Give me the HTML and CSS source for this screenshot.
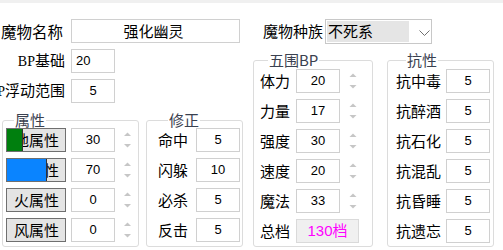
FILE: index.html
```html
<!DOCTYPE html>
<html lang="zh">
<head>
<meta charset="utf-8">
<title>魔物编辑</title>
<link rel="stylesheet" href="styles.css">
</head>
<body>
<div class="app">
  <div class="top-row">
    <div class="lbl lbl-top"><span>魔物名称</span></div>
    <div class="field name">强化幽灵</div>
    <div class="lbl-race">魔物种族</div>
    <div class="select">
      <span class="sel-val">不死系</span>
      <svg class="chev" width="11" height="6" viewBox="0 0 11 6"><polyline points="0.5,0.5 5.5,5.5 10.5,0.5" fill="none" stroke="#707070" stroke-width="1"/></svg>
    </div>
  </div>
  <div class="main">
    <div class="left">
      <div class="bp-row">
        <div class="lbl"><span><span class="mono">BP</span>基础</span></div>
        <div class="field num al-left">20</div>
      </div>
      <div class="bp-row">
        <div class="lbl"><span><span class="mono">BP</span>浮动范围</span></div>
        <div class="field num">5</div>
      </div>
      <div class="groups">
        <fieldset class="grp grp-attr">
          <legend>属性</legend>
          <div class="rows">
            <div class="row">
              <button class="attr-btn"><span class="swatch sw-green"></span>地属性</button>
              <div class="field num">30</div>
              <svg class="spin" width="9" height="24" viewBox="0 0 9 24"><polygon points="1,8 4.5,4.5 8,8" fill="#c6c6c6"/><polygon points="1,16 8,16 4.5,19.5" fill="#c6c6c6"/></svg>
            </div>
            <div class="row">
              <button class="attr-btn"><span class="swatch sw-blue"></span>水属性</button>
              <div class="field num">70</div>
              <svg class="spin" width="9" height="24" viewBox="0 0 9 24"><polygon points="1,8 4.5,4.5 8,8" fill="#c6c6c6"/><polygon points="1,16 8,16 4.5,19.5" fill="#c6c6c6"/></svg>
            </div>
            <div class="row">
              <button class="attr-btn">火属性</button>
              <div class="field num">0</div>
              <svg class="spin" width="9" height="24" viewBox="0 0 9 24"><polygon points="1,8 4.5,4.5 8,8" fill="#c6c6c6"/><polygon points="1,16 8,16 4.5,19.5" fill="#c6c6c6"/></svg>
            </div>
            <div class="row">
              <button class="attr-btn">风属性</button>
              <div class="field num">0</div>
              <svg class="spin" width="9" height="24" viewBox="0 0 9 24"><polygon points="1,8 4.5,4.5 8,8" fill="#c6c6c6"/><polygon points="1,16 8,16 4.5,19.5" fill="#c6c6c6"/></svg>
            </div>
          </div>
        </fieldset>
        <fieldset class="grp grp-mod">
          <legend>修正</legend>
          <div class="rows">
            <div class="row"><span class="rl w2">命中</span><div class="field num">5</div></div>
            <div class="row"><span class="rl w2">闪躲</span><div class="field num">10</div></div>
            <div class="row"><span class="rl w2">必杀</span><div class="field num">5</div></div>
            <div class="row"><span class="rl w2">反击</span><div class="field num">5</div></div>
          </div>
        </fieldset>
      </div>
    </div>
    <div class="right">
      <fieldset class="grp grp-bp">
        <legend>五围BP</legend>
        <div class="rows">
          <div class="row"><span class="rl w2">体力</span><div class="field num">20</div><svg class="spin" width="10" height="24" viewBox="0 0 10 24"><polygon points="1.5,8 5,4.5 8.5,8" fill="#c6c6c6"/><polygon points="1.5,16 8.5,16 5,19.5" fill="#c6c6c6"/></svg></div>
          <div class="row"><span class="rl w2">力量</span><div class="field num">17</div><svg class="spin" width="10" height="24" viewBox="0 0 10 24"><polygon points="1.5,8 5,4.5 8.5,8" fill="#c6c6c6"/><polygon points="1.5,16 8.5,16 5,19.5" fill="#c6c6c6"/></svg></div>
          <div class="row"><span class="rl w2">强度</span><div class="field num">30</div><svg class="spin" width="10" height="24" viewBox="0 0 10 24"><polygon points="1.5,8 5,4.5 8.5,8" fill="#c6c6c6"/><polygon points="1.5,16 8.5,16 5,19.5" fill="#c6c6c6"/></svg></div>
          <div class="row"><span class="rl w2">速度</span><div class="field num">20</div><svg class="spin" width="10" height="24" viewBox="0 0 10 24"><polygon points="1.5,8 5,4.5 8.5,8" fill="#c6c6c6"/><polygon points="1.5,16 8.5,16 5,19.5" fill="#c6c6c6"/></svg></div>
          <div class="row"><span class="rl w2">魔法</span><div class="field num">33</div><svg class="spin" width="10" height="24" viewBox="0 0 10 24"><polygon points="1.5,8 5,4.5 8.5,8" fill="#c6c6c6"/><polygon points="1.5,16 8.5,16 5,19.5" fill="#c6c6c6"/></svg></div>
          <div class="row"><span class="rl w2">总档</span><div class="field total">130档</div></div>
        </div>
      </fieldset>
      <fieldset class="grp grp-res">
        <legend>抗性</legend>
        <div class="rows">
          <div class="row"><span class="rl w3">抗中毒</span><div class="field num">5</div></div>
          <div class="row"><span class="rl w3">抗醉酒</span><div class="field num">5</div></div>
          <div class="row"><span class="rl w3">抗石化</span><div class="field num">5</div></div>
          <div class="row"><span class="rl w3">抗混乱</span><div class="field num">5</div></div>
          <div class="row"><span class="rl w3">抗昏睡</span><div class="field num">5</div></div>
          <div class="row"><span class="rl w3">抗遗忘</span><div class="field num">5</div></div>
        </div>
      </fieldset>
    </div>
  </div>
</div>
</body>
</html>
```
FILE: styles.css
```css
* { box-sizing: border-box; }
html, body { margin: 0; padding: 0; background: #ffffff; }
body {
  font-family: "Noto Sans CJK SC", "Noto Sans", sans-serif;
  font-size: 15px;
  line-height: 16px;
  color: #000000;
}
.app {
  width: 503px;
  height: 250px;
  overflow: hidden;
  border-top: 3px solid #f0f0f0;
}
.top-row {
  display: flex;
  align-items: center;
  height: 24px;
  margin-top: 16px;
}
.lbl {
  width: 65px;
  flex: none;
  display: flex;
  justify-content: flex-end;
  white-space: nowrap;
}
.lbl-top { font-size: 15.5px; width: 63px; margin-right: 2px; }
.mono { font-family: "Liberation Serif", serif; font-size: 14px; }
.field {
  flex: none;
  height: 24px;
  border: 1px solid #d0d0d0;
  background: #ffffff;
  display: flex;
  align-items: center;
  justify-content: center;
  white-space: nowrap;
}
.num {
  width: 44px;
  font-family: "Liberation Sans", Arial, sans-serif;
  font-size: 13px;
}
.al-left { justify-content: flex-start; padding-left: 4px; }
.name {
  width: 169px;
  margin-left: 6px;
  padding-right: 4px;
}
.lbl-race { margin-left: 23px; white-space: nowrap; }
.select {
  flex: none;
  width: 107px;
  height: 25px;
  margin-left: 2px;
  border: 1px solid #c8c8c8;
  display: flex;
  align-items: center;
  padding: 1px;
}
.sel-val {
  width: 82px;
  height: 100%;
  background: #e5e5e5;
  display: flex;
  align-items: center;
  padding-left: 1px;
}
.chev { margin-left: 10px; margin-top: 3px; }
.main { display: flex; align-items: flex-start; }
.left { width: 243px; flex: none; }
.bp-row {
  display: flex;
  align-items: center;
  height: 24px;
  margin-top: 6px;
}
.bp-row .field { margin-left: 6px; }
.groups { display: flex; margin-top: 9px; }
.grp {
  margin: 0;
  padding: 0;
  min-width: 0;
  border: 1px solid #dcdcdc;
  border-radius: 3px;
}
.grp legend {
  padding: 0 1px;
  height: 16px;
  line-height: 16px;
  font-size: 15px;
  color: #3a4150;
}
.rows { display: flex; flex-direction: column; gap: 6px; }
.row { display: flex; align-items: center; height: 24px; }
.rl { flex: none; white-space: nowrap; }
.w2 { width: 30px; }
.w3 { width: 45px; }

.grp-attr { margin-left: 2px; width: 137px; padding: 0 0 4px 3px; }
.grp-attr legend { margin-left: 8px; }
.grp-attr .field { margin-left: 5px; }
.attr-btn {
  position: relative;
  flex: none;
  width: 60px;
  height: 24px;
  margin: 0;
  padding: 0 0 0 1px;
  border: 1px solid #6f6f6f;
  border-radius: 0;
  background: #e4e4e4;
  font-family: "Noto Sans CJK SC", sans-serif;
  font-size: 15px;
  line-height: 16px;
  color: #000000;
  overflow: hidden;
}
.swatch {
  position: absolute;
  left: -1px;
  top: -1px;
  bottom: -1px;
  border: 1px solid #333333;
}
.sw-green { width: 17px; background: #007f0e; }
.sw-blue { width: 41px; background: #0a84ff; }
.spin { flex: none; margin-left: 8px; }

.grp-mod { margin-left: 7px; width: 97px; padding: 0 0 4px 11px; }
.grp-mod legend { margin-left: 10px; }
.grp-mod .field { margin-left: 8px; }

.right { display: flex; margin-left: 10px; margin-top: 9px; }
.grp-bp { width: 120px; padding: 1px 0 3px 6px; }
.grp-bp legend { margin-left: 8px; }
.grp-bp .field { margin-left: 6px; }
.grp-bp .spin { margin-left: 8px; }
.total {
  width: 63px;
  background: #f0f0f0;
  border-color: #dadada;
  color: #ff00ff;
  font-family: "Liberation Sans", "Noto Sans CJK SC", sans-serif;
  font-size: 15px;
}
.grp-res { margin-left: 14px; width: 107px; padding: 1px 0 3px 8px; }
.grp-res legend { margin-left: 10px; }
.grp-res .field { margin-left: 5px; }
```
